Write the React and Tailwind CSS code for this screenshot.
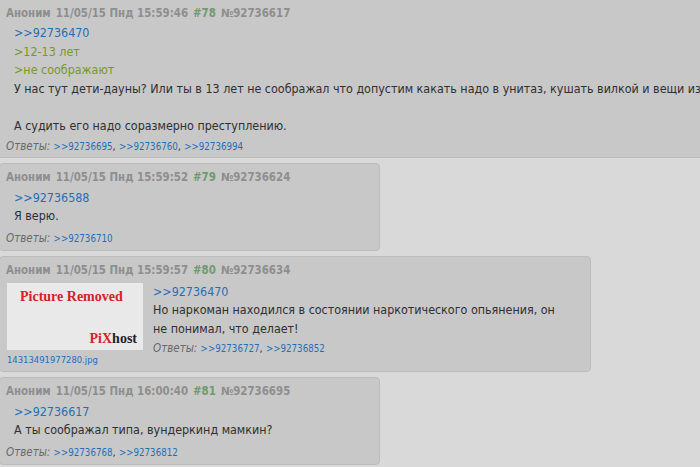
const font = { fontFamily: '"DejaVu Sans Condensed", "DejaVu Sans", Verdana, sans-serif' };

const Ref = ({ children }) => (
  <a className="text-[#1f6fb7] no-underline">{children}</a>
);

const PostHeader = ({ date, num, id }) => (
  <div className="flex gap-[5px] text-[11.4px] font-bold text-[#8e8e8e] leading-[16px] px-[6px] pt-[5px]">
    <span>Аноним</span>
    <span>{date}</span>
    <span className="text-[#6f9a6f]">#{num}</span>
    <span>№{id}</span>
  </div>
);

const Replies = ({ refs, className = '' }) => (
  <div className={`text-[10px] leading-[14px] ${className}`}>
    <em className="text-[#6a6a6a] text-[11.5px] leading-[10px]">Ответы: </em>
    {refs.map((r, i) => (
      <span key={r} className="text-[9.7px] leading-[10px]">
        {i > 0 && <span className="text-[#333] text-[11px] leading-[10px]">, </span>}
        <Ref>{'>>'}{r}</Ref>
      </span>
    ))}
  </div>
);

const Post = ({ className = '', children }) => (
  <div className={`bg-[#c8c8c8] border border-[#bcbcbc] rounded-[4px] ${className}`}>
    {children}
  </div>
);

const Body = ({ children, className = '' }) => (
  <div className={`text-[12.4px] leading-[18.6px] text-[#2f2f2f] ${className}`}>{children}</div>
);

export default function App() {
  return (
    <div className="w-[700px] h-[467px] overflow-hidden bg-[#d9d9d9]" style={font}>
      <div className="flex flex-col gap-[5px] -ml-[1px] -mt-[1px]">
        <Post className="w-[720px] rounded-none">
          <PostHeader date="11/05/15 Пнд 15:59:46" num="78" id="92736617" />
          <Body className="px-[14px] pt-[3px] whitespace-nowrap">
            <div><Ref>{'>>'}92736470</Ref></div>
            <div className="text-[#789922]">&gt;12-13 лет</div>
            <div className="text-[#789922]">&gt;не соображают</div>
            <div>У нас тут дети-дауны? Или ты в 13 лет не соображал что допустим какать надо в унитаз, кушать вилкой и вещи из своего шкафа надевать?</div>
            <div>&nbsp;</div>
            <div>А судить его надо соразмерно преступлению.</div>
          </Body>
          <Replies refs={['92736695', '92736760', '92736994']} className="px-[6px] pt-[4px] pb-[3px]" />
        </Post>

        <Post className="w-[381px]">
          <PostHeader date="11/05/15 Пнд 15:59:52" num="79" id="92736624" />
          <Body className="px-[14px] pt-[4px]">
            <div><Ref>{'>>'}92736588</Ref></div>
            <div>Я верю.</div>
          </Body>
          <Replies refs={['92736710']} className="px-[6px] pt-[6px] pb-[4px]" />
        </Post>

        <Post className="w-[592px]">
          <PostHeader date="11/05/15 Пнд 15:59:57" num="80" id="92736634" />
          <div className="flex gap-[10px] pl-[7px] pr-[24px] pt-[5px]">
            <div className="flex flex-col">
              <div className="w-[136px] h-[67px] bg-[#e9e9e9] flex flex-col justify-between px-[13px] pt-[6px] pb-[3px]" style={{ fontFamily: '"Liberation Serif", "DejaVu Serif", serif' }}>
                <div className="text-[#d2232a] text-[14px] font-bold leading-[16px]">Picture Removed</div>
                <div className="self-end text-[14px] font-bold leading-[16px] -mr-[7px]">
                  <span className="text-[#d2232a]">PiX</span><span className="text-[#222]">host</span>
                </div>
              </div>
              <a className="text-[#1f6fb7] text-[9.4px] leading-[13px] mt-[3px]">14313491977280.jpg</a>
            </div>
            <div className="flex-1">
              <Body>
                <div><Ref>{'>>'}92736470</Ref></div>
                <div>Но наркоман находился в состоянии наркотического опьянения, он не понимал, что делает!</div>
              </Body>
              <Replies refs={['92736727', '92736852']} className="pt-[3px]" />
            </div>
          </div>
          <div className="h-[5px]" />
        </Post>

        <Post className="w-[381px]">
          <PostHeader date="11/05/15 Пнд 16:00:40" num="81" id="92736695" />
          <Body className="px-[14px] pt-[4px]">
            <div><Ref>{'>>'}92736617</Ref></div>
            <div>А ты соображал типа, вундеркинд мамкин?</div>
          </Body>
          <Replies refs={['92736768', '92736812']} className="px-[6px] pt-[6px] pb-[4px]" />
        </Post>
      </div>
    </div>
  );
}
